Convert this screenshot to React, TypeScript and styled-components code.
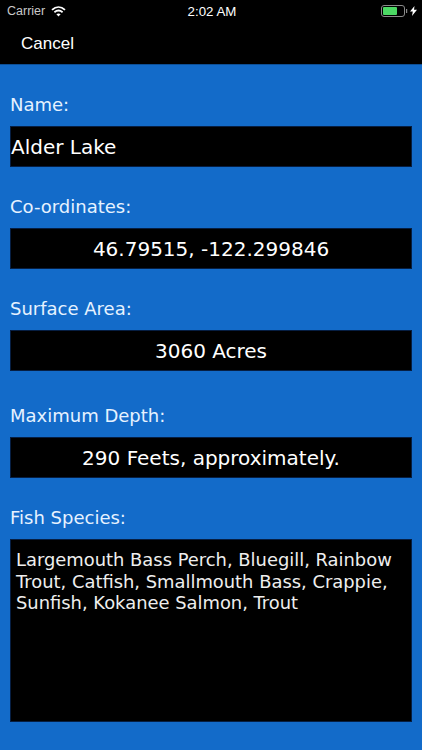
import React from 'react'
import styled, { createGlobalStyle } from 'styled-components'

const GlobalStyle = createGlobalStyle`
  html, body {
    margin: 0;
    padding: 0;
    background: #136bc9;
  }
  body {
    font-family: "DejaVu Sans", Verdana, sans-serif;
  }
`

const Screen = styled.div`
  width: 422px;
  height: 750px;
  overflow: hidden;
  display: flex;
  flex-direction: column;
  background: #136bc9;
`

const TopBar = styled.header`
  height: 65px;
  background: #000;
  color: #fff;
  border-bottom: 1px solid #0d4f96;
  box-sizing: border-box;
`

const StatusBar = styled.div`
  height: 22px;
  display: flex;
  align-items: center;
  justify-content: space-between;
  padding: 0 5px 0 7px;
  font-family: "Liberation Sans", Arial, sans-serif;
  font-size: 12.5px;
`

const StatusSide = styled.div<{ $end?: boolean }>`
  width: 130px;
  display: flex;
  align-items: center;
  gap: 6px;
  justify-content: ${({ $end }) => ($end ? 'flex-end' : 'flex-start')};
`

const Carrier = styled.span`
  color: #c9c9c9;
`

const Time = styled.span`
  font-weight: 500;
  font-size: 13.3px;
`

const CancelButton = styled.button`
  display: block;
  margin: 4px 0 0 21px;
  padding: 0;
  border: 0;
  background: none;
  color: #fff;
  font-family: "Liberation Sans", Arial, sans-serif;
  font-size: 17px;
  line-height: 36px;
`

const Form = styled.main`
  flex: 1;
  padding: 0 10px;
  color: #e6f2ff;
`

const Label = styled.div<{ $top: number }>`
  margin-top: ${({ $top }) => $top}px;
  height: 22px;
  line-height: 22px;
  font-size: 18px;
`

const Value = styled.div<{ $center?: boolean }>`
  margin-top: 10px;
  height: 41px;
  line-height: 43px;
  background: #000;
  color: #fff;
  font-size: 20px;
  white-space: nowrap;
  box-shadow: 0 0 0 1px rgba(10, 50, 110, 0.6) inset;
  text-align: ${({ $center }) => ($center ? 'center' : 'left')};
  padding-left: ${({ $center }) => ($center ? 0 : 1)}px;
`

const SpeciesBox = styled.div`
  margin-top: 10px;
  height: 183px;
  box-sizing: border-box;
  padding: 10px 5px 9px 6px;
  background: #000;
  color: #eeeeee;
  font-size: 17.9px;
  line-height: 21.7px;
  box-shadow: 0 0 0 1px rgba(10, 50, 110, 0.6) inset;
`

const Wifi = () => (
  <svg width="15" height="11" viewBox="0 0 15 11" fill="none" stroke="#fff" strokeWidth="1.8">
    <path d="M1 3.8C5 0.2 10 0.2 14 3.8" />
    <path d="M3.4 6.2C6 4 9 4 11.6 6.2" />
    <path d="M7.5 10.6 5.4 8.2C6.6 7.2 8.4 7.2 9.6 8.2Z" fill="#fff" stroke="none" />
  </svg>
)

const Battery = () => (
  <svg width="36" height="12" viewBox="0 0 36 12">
    <rect x="0.5" y="0.5" width="23" height="11" rx="2.5" fill="none" stroke="#8a8a8a" />
    <rect x="2" y="2" width="14" height="8" rx="1" fill="#4cd964" />
    <rect x="25" y="4" width="1.2" height="4" fill="#8a8a8a" />
    <path d="M33.5 1 29 6.6H31.8L31 11 36 4.8H33Z" fill="#fff" />
  </svg>
)

const fields = [
  { label: 'Name:', value: 'Alder Lake', top: 29 },
  { label: 'Co-ordinates:', value: '46.79515, -122.299846', center: true, top: 29 },
  { label: 'Surface Area:', value: '3060 Acres', center: true, top: 29 },
  { label: 'Maximum Depth:', value: '290 Feets, approximately.', center: true, top: 34 },
]

export default function App() {
  return (
    <Screen>
      <GlobalStyle />
      <TopBar>
        <StatusBar>
          <StatusSide>
            <Carrier>Carrier</Carrier>
            <Wifi />
          </StatusSide>
          <Time>2:02 AM</Time>
          <StatusSide $end>
            <Battery />
          </StatusSide>
        </StatusBar>
        <CancelButton>Cancel</CancelButton>
      </TopBar>
      <Form>
        {fields.map((f) => (
          <React.Fragment key={f.label}>
            <Label $top={f.top}>{f.label}</Label>
            <Value $center={f.center}>{f.value}</Value>
          </React.Fragment>
        ))}
        <Label $top={29}>Fish Species:</Label>
        <SpeciesBox>
          Largemouth Bass Perch, Bluegill, Rainbow Trout, Catfish, Smallmouth Bass, Crappie,
          Sunfish, Kokanee Salmon, Trout
        </SpeciesBox>
      </Form>
    </Screen>
  )
}
